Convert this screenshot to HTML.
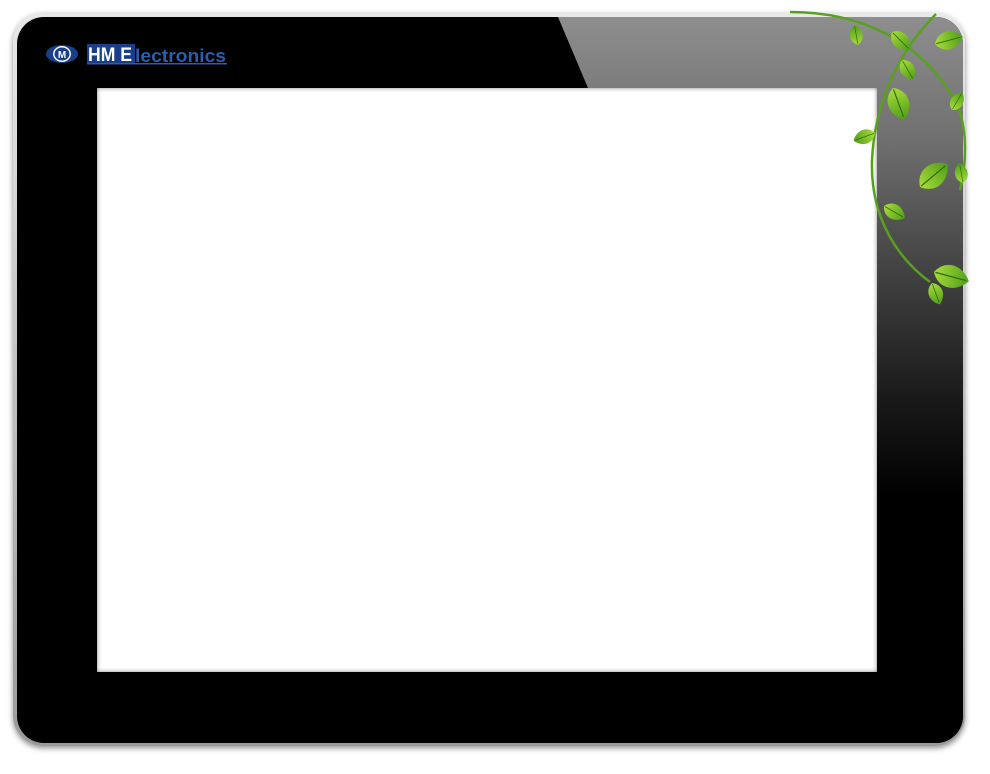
<!DOCTYPE html>
<html><head><style>
html,body{margin:0;padding:0;background:#fff;width:990px;height:774px;overflow:hidden;position:relative;font-family:"Liberation Sans",sans-serif}
.outer{position:absolute;left:13px;top:13px;width:952px;height:733px;border-radius:30px;background:linear-gradient(#e8e8e8,#9a9a9a);box-shadow:0 2px 6px rgba(0,0,0,.45)}
.frame{position:absolute;left:17px;top:17px;width:946px;height:726px;border-radius:27px;background:#000;overflow:hidden}
.gloss{position:absolute;left:0;top:0;width:946px;height:726px;background:linear-gradient(#8e8e8e 0px,#707070 120px,#404040 260px,#1a1a1a 380px,#000 480px);clip-path:polygon(541px 0,946px 0,946px 726px,860px 726px,860px 71px,571px 71px)}
.screen{position:absolute;left:97px;top:88px;width:780px;height:584px;background:#fff;box-shadow:inset 0 0 4px rgba(0,0,0,.5)}
.logo{position:absolute;left:46px;top:43px}
</style></head><body>
<div class="outer"></div>
<div class="frame"><div class="gloss"></div></div>
<div class="screen"></div>
<svg class="logo" width="190" height="24" viewBox="0 0 190 24">
<ellipse cx="16" cy="11" rx="16" ry="9" fill="#1a3f8a"/>
<ellipse cx="16" cy="11" rx="9" ry="8" fill="#fff"/>
<ellipse cx="16" cy="11" rx="7.5" ry="6.5" fill="#1a3f8a"/>
<text x="16" y="15" font-size="10" font-weight="bold" fill="#fff" text-anchor="middle" font-family="Liberation Sans">M</text>
<rect x="41" y="1" width="48" height="19" fill="#1a3f8a"/>
<text x="42" y="18" font-size="19" font-weight="bold" fill="#fff" font-family="Liberation Sans" textLength="44" lengthAdjust="spacingAndGlyphs">HM E</text>
<text x="89" y="19" font-size="18" font-weight="bold" fill="#2a5cb0" font-family="Liberation Sans" textLength="91" lengthAdjust="spacingAndGlyphs">lectronics</text>
<rect x="41" y="20" width="140" height="1.5" fill="#2a5cb0"/>
</svg>
<svg style="position:absolute;left:0;top:0" width="990" height="774">
<defs>
<linearGradient id="lg" x1="0" y1="0" x2="1" y2="0"><stop offset="0" stop-color="#a8dc3a"/><stop offset="1" stop-color="#4f9e18"/></linearGradient>
<g id="lf"><path d="M0,0 C5,-10 17,-10 24,0 C17,10 5,10 0,0Z" fill="url(#lg)"/><path d="M1,0 L22,0" stroke="#2e6a0c" stroke-width="0.8"/></g>
</defs>
<path d="M790,12 C860,12 920,40 955,100 C970,130 965,170 960,190" fill="none" stroke="#5aa020" stroke-width="2.5"/>
<path d="M936,14 C900,50 875,100 872,160 C870,220 900,260 930,282" fill="none" stroke="#5aa020" stroke-width="2.5"/>
<use href="#lf" transform="translate(858,45) rotate(-100) scale(0.85)"/>
<use href="#lf" transform="translate(892,32) rotate(45) scale(1.05)"/>
<use href="#lf" transform="translate(902,60) rotate(60) scale(0.95)"/>
<use href="#lf" transform="translate(893,88) rotate(70) scale(1.4)"/>
<use href="#lf" transform="translate(935,44) rotate(-15) scale(1.2)"/>
<use href="#lf" transform="translate(952,110) rotate(-60) scale(0.85)"/>
<use href="#lf" transform="translate(875,133) rotate(160) scale(0.95)"/>
<use href="#lf" transform="translate(920,187) rotate(-40) scale(1.5)"/>
<use href="#lf" transform="translate(963,183) rotate(-100) scale(0.85)"/>
<use href="#lf" transform="translate(884,206) rotate(30) scale(1.0)"/>
<use href="#lf" transform="translate(934,272) rotate(15) scale(1.5)"/>
<use href="#lf" transform="translate(932,283) rotate(70) scale(0.95)"/>
</svg>
</body></html>
